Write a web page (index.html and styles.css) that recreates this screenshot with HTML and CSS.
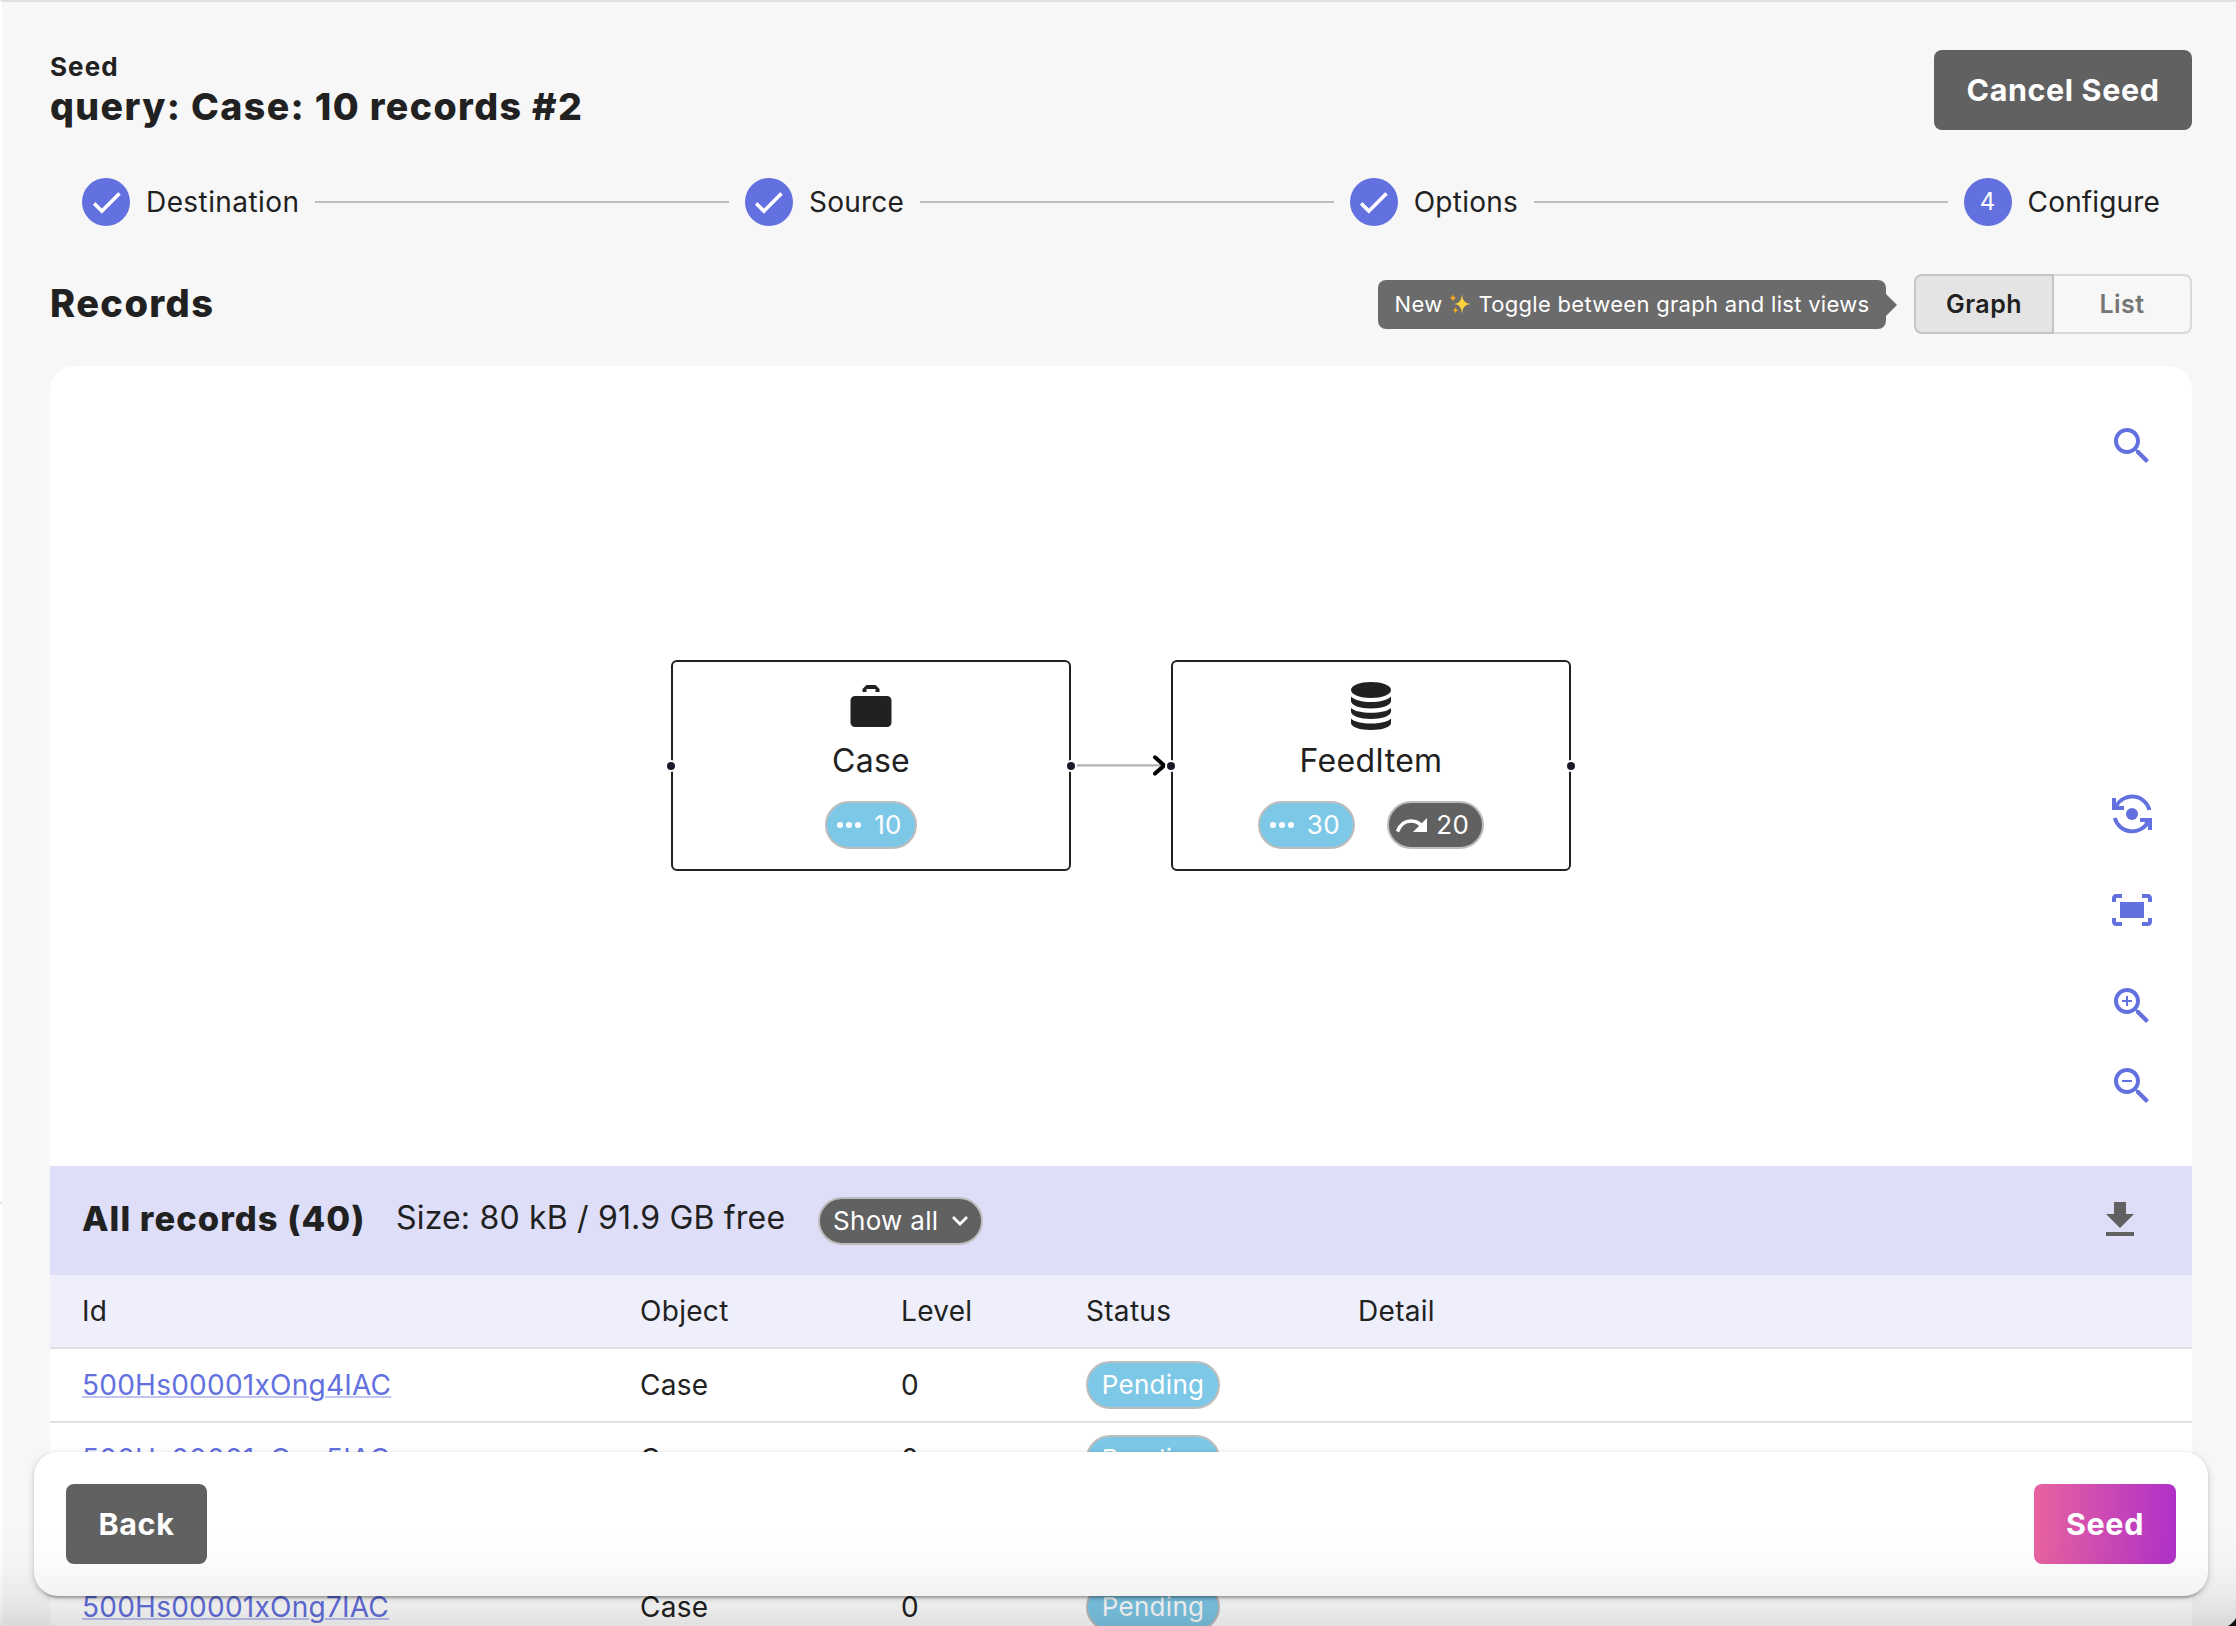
FILE: index.html
```html
<!DOCTYPE html>
<html lang="en">
<head>
<meta charset="utf-8">
<title>Seed</title>
<link rel="stylesheet" href="styles.css">
</head>
<body>
<svg class="defs" width="0" height="0">
  <symbol id="check" viewBox="0 0 24 24"><path d="M9 16.17 4.83 12l-1.42 1.41L9 19 21 7l-1.41-1.41z"/></symbol>
  <symbol id="dots" viewBox="0 0 24 6"><circle cx="3" cy="3" r="3"/><circle cx="12" cy="3" r="3"/><circle cx="21" cy="3" r="3"/></symbol>
</svg>
<main class="page">
  <header class="top">
    <div class="titles">
      <p class="kicker">Seed</p>
      <h1>query: Case: 10 records #2</h1>
    </div>
    <button class="btn btn-cancel">Cancel Seed</button>
  </header>

  <ol class="stepper">
    <li class="step"><span class="dot"><svg><use href="#check"/></svg></span><span class="lbl">Destination</span></li>
    <li class="line"></li>
    <li class="step"><span class="dot"><svg><use href="#check"/></svg></span><span class="lbl">Source</span></li>
    <li class="line"></li>
    <li class="step"><span class="dot"><svg><use href="#check"/></svg></span><span class="lbl">Options</span></li>
    <li class="line"></li>
    <li class="step"><span class="dot">4</span><span class="lbl">Configure</span></li>
  </ol>

  <div class="subhead">
    <h2>Records</h2>
    <div class="tip"><span>New</span>
      <svg class="sparkles" viewBox="0 0 22 22"><path fill="#fdd23c" d="M13 1c.7 6.500 2.200 8.900 8.500 10-6.300 1.100-7.800 3.500-8.500 10-.7-6.500-2.200-8.900-7.500-10C10.800 9.900 12.300 7.500 13 1z"/><path fill="#f6a623" d="M4 1c.4 2.500 1.300 3.500 3.500 4C5.300 5.500 4.400 6.500 4 9 3.600 6.500 2.700 5.500.5 5 2.700 4.500 3.600 3.500 4 1zM6.500 14c.4 2 1.200 2.900 3.200 3.300-2 .4-2.800 1.300-3.200 3.400-.4-2.100-1.200-3-3.200-3.400 2-.4 2.800-1.300 3.200-3.300z"/></svg>
      <span>Toggle between graph and list views</span></div>
    <div class="toggle">
      <button class="on">Graph</button><button>List</button>
    </div>
  </div>

  <section class="card">
    <div class="canvas">
      <div class="node node-case">
        <svg class="ico" viewBox="0 0 48 48"><path d="M8 15h32a4.500 4.500 0 0 1 4.500 4.500v22A4.500 4.500 0 0 1 40 46H8a4.500 4.500 0 0 1-4.500-4.500v-22A4.500 4.500 0 0 1 8 15zM15.500 11V8l4-4h9l4 4v3h-4V8h-9v3z"/></svg>
        <span class="name">Case</span>
        <div class="chips"><span class="chip blue"><svg class="i-dots"><use href="#dots"/></svg>10</span></div>
        <i class="handle l"></i><i class="handle r"></i>
      </div>
      <svg class="edge" viewBox="0 0 100 24"><path d="M6 12.400H92" stroke="#b1b1b7" stroke-width="2.400"/><path d="M84 4.300 93.200 12.400 84 20.600" fill="none" stroke="#000" stroke-width="4" stroke-linecap="round" stroke-linejoin="round"/></svg>
      <div class="node node-feed">
        <svg class="ico" viewBox="0 0 48 48"><path d="M4 8C4 3.500 13 0 24 0s20 3.500 20 8-9 8-20 8S4 12.500 4 8z"/><path d="M4 14.500C7 18 15 20 24 20s17-2 20-5.500V19c0 4.500-9 7.500-20 7.500S4 23.500 4 19zM4 26c3 3.200 11 4.800 20 4.800S41 29.200 44 26v3.500c0 4.500-9 7.500-20 7.500S4 34 4 29.500zM4 36.500c3 3.200 11 5 20 5s17-1.800 20-5V41c0 4.200-9 7-20 7S4 45.200 4 41z"/></svg>
        <span class="name">FeedItem</span>
        <div class="chips">
          <span class="chip blue"><svg class="i-dots"><use href="#dots"/></svg>30</span>
          <span class="chip dark"><svg class="i-redo" viewBox="0 0 31 15"><path d="M1.500 13.500C4 7 9 3 15 3s9 2.500 11 5.500" fill="none" stroke="#fff" stroke-width="3.600"/><path d="M31 0v14H17z"/></svg>20</span>
        </div>
        <i class="handle l"></i><i class="handle r"></i>
      </div>
      <div class="tools">
        <svg viewBox="0 0 24 24"><path d="M15.500 14h-.79l-.28-.27C15.410 12.590 16 11.110 16 9.500 16 5.910 13.090 3 9.500 3S3 5.910 3 9.500 5.910 16 9.500 16c1.610 0 3.090-.59 4.230-1.570l.27.28v.79l5 4.990L20.490 19zm-6 0C7.010 14 5 11.990 5 9.500S7.010 5 9.500 5 14 7.010 14 9.500 11.990 14 9.500 14z"/></svg>
        <svg class="gap-top" viewBox="0 0 48 48"><circle cx="24" cy="24" r="6"/><g fill="none" stroke="#6370df" stroke-width="3.800"><path d="M8.500 15.500A18 18 0 0 1 41.500 20M6.800 28A18 18 0 0 0 40 32"/></g><path d="M4 8h4v6.500l3.500 1.500H16v4H4zM44 40h-4v-6.500L36 32h-4v-4h12z"/></svg>
        <svg viewBox="0 0 24 24"><path d="M17 4h3c1.100 0 2 .9 2 2v2h-2V6h-3zM4 8V6h3V4H4c-1.100 0-2 .9-2 2v2zm16 8v2h-3v2h3c1.100 0 2-.9 2-2v-2zM7 18H4v-2H2v2c0 1.100.9 2 2 2h3zM18 8H6v8h12z"/></svg>
        <svg viewBox="0 0 24 24"><path d="M15.500 14h-.79l-.28-.27C15.410 12.590 16 11.110 16 9.500 16 5.910 13.090 3 9.500 3S3 5.910 3 9.500 5.910 16 9.500 16c1.610 0 3.090-.59 4.230-1.570l.27.28v.79l5 4.990L20.490 19zm-6 0C7.010 14 5 11.990 5 9.500S7.010 5 9.500 5 14 7.010 14 9.500 11.990 14 9.500 14zM12 10h-2v2H9v-2H7V9h2V7h1v2h2z"/></svg>
        <svg class="tight" viewBox="0 0 24 24"><path d="M15.500 14h-.79l-.28-.27C15.410 12.590 16 11.110 16 9.500 16 5.910 13.090 3 9.500 3S3 5.910 3 9.500 5.910 16 9.500 16c1.610 0 3.090-.59 4.230-1.570l.27.28v.79l5 4.990L20.490 19zm-6 0C7.010 14 5 11.990 5 9.500S7.010 5 9.500 5 14 7.010 14 9.500 11.990 14 9.500 14zM7 9h5v1H7z"/></svg>
      </div>
    </div>

    <div class="bar">
      <h3>All records (40)</h3>
      <span class="size">Size: 80 kB / 91.9 GB free</span>
      <span class="chip dark show">Show all<svg viewBox="0 0 18 11"><path d="M2 2l7 7 7-7" fill="none" stroke="#fff" stroke-width="2.800"/></svg></span>
      <svg class="download" viewBox="0 0 24 24"><path d="M19 9h-4V3H9v6H5l7 7zM5 18v2h14v-2z"/></svg>
    </div>

    <div class="row head"><span>Id</span><span>Object</span><span>Level</span><span>Status</span><span>Detail</span></div>
    <div class="row"><span><a>500Hs00001xOng4IAC</a></span><span>Case</span><span>0</span><span><b class="chip blue pend">Pending</b></span><span></span></div>
    <div class="row"><span><a>500Hs00001xOng5IAC</a></span><span>Case</span><span>0</span><span><b class="chip blue pend">Pending</b></span><span></span></div>
    <div class="row"></div>
    <div class="row"><span><a>500Hs00001xOng7IAC</a></span><span>Case</span><span>0</span><span><b class="chip blue pend">Pending</b></span><span></span></div>
  </section>
</main>
<footer class="actions">
  <button class="btn btn-back">Back</button>
  <button class="btn btn-seed">Seed</button>
</footer>
<div class="shade"></div>
<svg class="corner" viewBox="0 0 8 8"><path d="M8 0v8H0C3.500 6 6 3.500 8 0z"/></svg>
<i class="tick"></i>
</body>
</html>
```
FILE: styles.css
```css
* { box-sizing: border-box; }
body {
  margin: 0;
  width: 2236px;
  height: 1626px;
  overflow: hidden;
  position: relative;
  background: #f7f7f7;
  color: #212121;
  font: 28px/40px Inter, "Liberation Sans", sans-serif;
  letter-spacing: 0.3px;
}
h1, h2, h3, p, ol { margin: 0; padding: 0; }
button { font: inherit; letter-spacing: inherit; border: 0; padding: 0; }
.defs { position: absolute; }
.page {
  border-top: 2px solid #e0e0e0;
  border-left: 2px solid #fff;
  padding: 48px 44px 0 48px;
  height: 1626px;
  overflow: hidden;
}
.top { display: flex; justify-content: space-between; height: 80px; }
.kicker { font-size: 26px; line-height: 34px; font-weight: 650; letter-spacing: 1.1px; }
h1 { font-size: 37.5px; line-height: 46px; font-weight: 780; letter-spacing: 1.4px; }
.btn {
  height: 80px;
  border-radius: 8px;
  background: #616161;
  color: #fff;
  font-size: 30.5px;
  font-weight: 650;
  letter-spacing: 0.6px;
}
.btn-cancel { width: 258px; }
.btn-back { width: 141px; }
.btn-seed { width: 142px; background: linear-gradient(90deg, #e8639f, #b030c8); }

.stepper {
  display: flex;
  align-items: center;
  gap: 16px;
  list-style: none;
  height: 48px;
  margin-top: 48px;
  padding: 0 32px;
}
.step { display: flex; align-items: center; gap: 16px; }
.lbl { letter-spacing: 0.25px; }
.step:first-child .lbl { letter-spacing: 0.42px; }
.step:last-child .lbl { letter-spacing: 0.15px; }
.dot {
  width: 48px;
  height: 48px;
  border-radius: 50%;
  background: #6370df;
  color: #fff;
  display: flex;
  align-items: center;
  justify-content: center;
  font-size: 24px;
}
.dot svg { width: 37px; height: 37px; fill: #fff; stroke: #fff; stroke-width: 0.5; }
.line { flex: 1; height: 2px; background: #bdbdbd; }

.subhead { display: flex; align-items: center; height: 60px; margin-top: 48px; }
h2 { font-size: 38px; line-height: 48px; font-weight: 780; letter-spacing: 1.4px; margin: -2px auto 0 0; }
.tip {
  position: relative;
  display: flex;
  align-items: center;
  justify-content: center;
  gap: 7px;
  width: 508px;
  height: 49px;
  margin-right: 28px;
  border-radius: 8px;
  background: #6b6b6b;
  color: #fff;
  font-size: 22px;
}
.tip::after {
  content: "";
  position: absolute;
  left: 508px;
  top: 14px;
  border: 11px solid transparent;
  border-left-color: #6b6b6b;
  border-right: 0;
}
.sparkles { width: 22px; height: 22px; }
.toggle { display: flex; width: 278px; height: 60px; }
.toggle button {
  flex: 1;
  border: 2px solid #d9d9d9;
  border-left: 0;
  border-radius: 0 8px 8px 0;
  background: none;
  color: #757575;
  font-size: 25px;
  font-weight: 600;
  letter-spacing: 0.5px;
}
.toggle .on {
  border: 2px solid #c5c5c5;
  border-radius: 8px 0 0 8px;
  background: #e4e4e4;
  color: #212121;
  flex: 0 0 140px;
}

.card { margin-top: 32px; background: #fff; border-radius: 24px 24px 0 0; }
.canvas { position: relative; height: 800px; }
.node {
  position: absolute;
  top: 294px;
  width: 400px;
  height: 211px;
  border: 2px solid #212121;
  border-radius: 6px;
  background: #fff;
  display: flex;
  flex-direction: column;
  align-items: center;
  padding-top: 20px;
}
.node-case { left: 621px; }
.node-feed { left: 1121px; }
.ico { width: 48px; height: 48px; fill: #212121; }
.node-case .ico { transform: translateY(-1px); }
.name { font-size: 32px; line-height: 40px; margin-top: 11px; letter-spacing: 0.3px; }
.chips { display: flex; gap: 32px; margin-top: 20px; }
.chip {
  height: 48px;
  border: 2px solid #bdbdbd;
  border-radius: 24px;
  display: flex;
  align-items: center;
  color: #fff;
  font-size: 26px;
  font-weight: 400;
  padding: 0 13px 0 10px;
}
.blue { background: #7dc8e7; }
.dark { background: #616161; }
.chip svg { fill: #fff; flex: none; }
.i-dots { width: 24px; height: 6px; margin-right: 13px; }
.i-redo { width: 31px; height: 15px; margin: 0 9.5px 0 -3px; }
.handle {
  position: absolute;
  top: 98px;
  width: 12px;
  height: 12px;
  border-radius: 50%;
  border: 2px solid #fff;
  background: #1a192b;
}
.handle.l { left: -8px; }
.handle.r { right: -8px; }
.edge { position: absolute; left: 1021px; top: 387px; width: 100px; height: 24px; }
.tools {
  position: absolute;
  top: 56px;
  right: 36px;
  display: flex;
  flex-direction: column;
  gap: 48px;
  fill: #6370df;
}
.tools svg { width: 48px; height: 48px; }
.tools .gap-top { margin-top: 272px; }
.tools .tight { margin-top: -16px; }

.bar { display: flex; align-items: center; height: 109px; padding: 0 48px 0 32px; background: #dedef9; }
h3 { font-size: 34.5px; line-height: 40px; font-weight: 780; letter-spacing: 1.05px; width: 314px; white-space: nowrap; margin-top: -3px; }
.size { font-size: 32px; width: 422px; white-space: nowrap; letter-spacing: 0.18px; margin-top: -5px; }
.show { width: 165px; padding: 0 12px 0 13px; justify-content: space-between; margin-right: auto; }
.show svg { width: 18px; height: 11px; }
.download { width: 48px; height: 48px; fill: #616161; margin-top: -1px; }

.row {
  display: grid;
  grid-template-columns: 558px 261px 185px 272px 1fr;
  align-items: center;
  height: 74px;
  padding-left: 32px;
  border-bottom: 2px solid #e0e0e0;
}
.head { background: #efeffc; }
a {
  color: #6370df;
  letter-spacing: 0.25px;
  text-decoration: underline;
  text-decoration-color: #c1c6f2;
  text-decoration-thickness: 2px;
}
.pend { width: 134px; padding: 0; justify-content: center; }

.actions {
  position: absolute;
  left: 34px;
  top: 1452px;
  width: 2174px;
  height: 144px;
  padding: 0 32px;
  display: flex;
  align-items: center;
  justify-content: space-between;
  border-radius: 24px;
  background: #fff;
  box-shadow: 0 6px 2px -4px rgba(0,0,0,.2), 0 2px 4px rgba(0,0,0,.14), 0 2px 10px rgba(0,0,0,.12);
}
.shade {
  position: absolute;
  left: 0;
  right: 0;
  top: 1526px;
  height: 100px;
  background: linear-gradient(rgba(0,0,0,0), rgba(0,0,0,.012) 35%, rgba(0,0,0,.05) 70%, rgba(0,0,0,.12));
}
.corner { position: absolute; right: 0; bottom: 0; width: 8px; height: 8px; fill: #0b1114; }
.tick { position: absolute; left: 0; top: 1202px; width: 2px; height: 2px; background: #e0e0e0; }
```
